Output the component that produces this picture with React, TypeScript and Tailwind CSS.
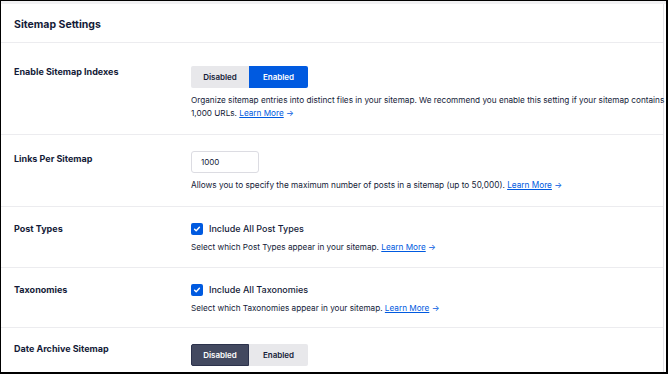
import React from "react";

const font = { fontFamily: "Inter, 'Noto Sans', sans-serif" };

function Check() {
  return (
    <span className="flex h-[12px] w-[12px] items-center justify-center rounded-[2px] bg-[#005ae0]">
      <svg width="8" height="8" viewBox="0 0 10 10" fill="none">
        <path d="M2 5.2l2 2 4-4.4" stroke="white" strokeWidth="1.8" strokeLinecap="round" strokeLinejoin="round" />
      </svg>
    </span>
  );
}

function Learn() {
  return (
    <>
      {" "}
      <span className="text-[#005ae0] underline underline-offset-[1px]">Learn More</span>
      <span className="text-[#005ae0]"> →</span>
    </>
  );
}

function Toggle({ enabled }: { enabled: boolean }) {
  return (
    <div className="flex h-[22px] w-[117px] text-[8px] font-semibold">
      <div
        className={
          "flex w-[58px] items-center justify-center rounded-l-[2px] " +
          (!enabled ? "bg-[#434960] text-white border border-[#2c324c]" : "bg-[#e8e8eb] text-[#141b38]")
        }
      >
        Disabled
      </div>
      <div
        className={
          "flex flex-1 items-center justify-center rounded-r-[2px] " +
          (enabled ? "bg-[#005ae0] text-white" : "bg-[#e8e8eb] text-[#141b38]")
        }
      >
        Enabled
      </div>
    </div>
  );
}

function Row({
  label,
  children,
  pt,
  pb,
  labelMt,
}: {
  label: string;
  children: React.ReactNode;
  pt: string;
  pb: string;
  labelMt: string;
}) {
  return (
    <div className={"flex border-b border-[#ececef] " + pt + " " + pb}>
      <div className={"w-[190px] shrink-0 pl-[13px] text-[9px] font-bold leading-[12px] text-[#141b38] " + labelMt}>
        {label}
      </div>
      <div className="min-w-0 flex-1">{children}</div>
    </div>
  );
}

export default function App() {
  return (
    <div
      style={font}
      className="relative h-[374px] w-[668px] overflow-hidden border-t border-l border-b-2 border-r-2 border-black bg-white text-[#141b38]"
    >
      <div className="h-[3px] bg-[#f1f1f3]" />
      <div className="mr-[2px] border-r border-[#e4e4e8]">
        <div className="flex h-[39px] items-center border-b border-[#ececef] pl-[13px] pt-[3px] text-[10.5px] font-bold">
          Sitemap Settings
        </div>
        <Row label="Enable Sitemap Indexes" pt="pt-[23px]" pb="pb-[14px]" labelMt="mt-[0px]">
          <Toggle enabled />
          <p className="mt-[6px] whitespace-nowrap text-[8.2px] leading-[13px] text-[#141b38]">
            Organize sitemap entries into distinct files in your sitemap. We recommend you enable this setting if your sitemap contains
          </p>
          <p className="whitespace-nowrap text-[8.2px] leading-[13px]">
            1,000 URLs.
            <Learn />
          </p>
        </Row>
        <Row label="Links Per Sitemap" pt="pt-[16px]" pb="pb-[14px]" labelMt="mt-[2px]">
          <div className="flex h-[22px] w-[68px] items-center rounded-[3px] border border-[#dcdce2] pl-[9px] text-[8px]">
            1000
          </div>
          <p className="mt-[6px] whitespace-nowrap text-[8.25px] leading-[13px]">
            Allows you to specify the maximum number of posts in a sitemap (up to 50,000).
            <Learn />
          </p>
        </Row>
        <Row label="Post Types" pt="pt-[16px]" pb="pb-[13px]" labelMt="mt-[0px]">
          <div className="flex h-[12px] items-center gap-[6px]">
            <Check />
            <span className="text-[9px] font-medium">Include All Post Types</span>
          </div>
          <p className="mt-[6px] whitespace-nowrap text-[8.2px] leading-[13px]">
            Select which Post Types appear in your sitemap.
            <Learn />
          </p>
        </Row>
        <Row label="Taxonomies" pt="pt-[16px]" pb="pb-[12px]" labelMt="mt-[0px]">
          <div className="flex h-[12px] items-center gap-[6px]">
            <Check />
            <span className="text-[9px] font-medium">Include All Taxonomies</span>
          </div>
          <p className="mt-[6px] whitespace-nowrap text-[8.2px] leading-[13px]">
            Select which Taxonomies appear in your sitemap.
            <Learn />
          </p>
        </Row>
        <Row label="Date Archive Sitemap" pt="pt-[16px]" pb="pb-[10px]" labelMt="mt-[-1px]">
          <Toggle enabled={false} />
        </Row>
      </div>
    </div>
  );
}
